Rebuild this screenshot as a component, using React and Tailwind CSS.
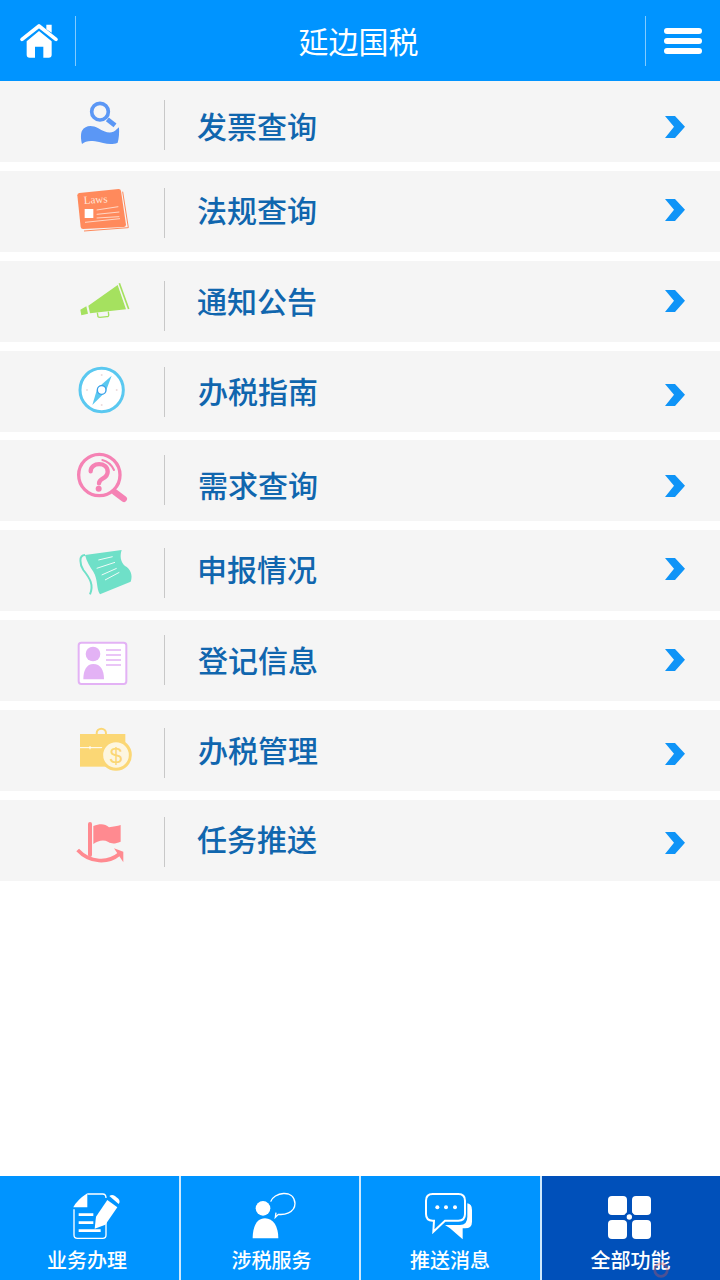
const FONT = "font-['Noto_Sans_CJK_SC','Noto_Sans',sans-serif]";

function Chevron() {
  return (
    <svg viewBox="135 348 60 66" className="w-[20px] h-[22px]">
      <path d="M135 348 L165 348 L195 380 L165 414 L135 414 L162 380Z" fill="#0f94f7" />
    </svg>
  );
}

const ic1 = (
  <g>
    <circle cx="300" cy="335" r="25" fill="none" stroke="#5b97f5" strokeWidth="11" />
    <path d="M322 358 L345 376" stroke="#5b97f5" strokeWidth="14" />
    <path d="M246 432 C242 415 242 400 246 392 C256 376 275 374 295 385 C315 397 335 405 350 388 L357 382 C358 400 357 415 353 428 C330 438 310 428 285 424 C268 421 255 424 246 432Z" fill="#5b97f5" />
  </g>
);
const ic2 = (
  <g>
    <path d="M368 575 L385 683 L252 693" fill="none" stroke="#ff8a5c" strokeWidth="3" />
    <path d="M238 579 L356 567 Q362 567 363 573 L378 674 Q378 680 372 681 L249 687 Q243 687 242 681 L232 586 Q232 580 238 579Z" fill="#ff8a5c" />
    <text x="252" y="612" fontSize="33" fill="#ffe6da" transform="rotate(-4 252 612)" fontFamily="Liberation Serif, serif">Laws</text>
    <rect x="254" y="627" width="26" height="27" fill="#fff" />
    <path d="M290 630 L355 620 M290 643 L358 636 M290 654 L358 650 M255 667 L360 656" stroke="#ffe6da" strokeWidth="2.5" />
  </g>
);
const ic3 = (
  <g>
    <path d="M121 149 L139 139 L144 161 L124 166Z M145 137 L233 75 L258 148 L150 160Z" fill="#a5e15f" />
    <path d="M238 70 L266 147" stroke="#a5e15f" strokeWidth="5" />
    <path d="M172 158 L174 170 Q175 172 180 172 L200 170 Q207 170 206 165 L205 155" fill="none" stroke="#a5e15f" strokeWidth="4" />
  </g>
);
const ic4 = (
  <g>
    <circle cx="185" cy="390" r="65" fill="#fff" stroke="#5ac8f0" strokeWidth="9" />
    <path d="M215 347 L197 395 L172 385Z" fill="#5ac8f0" />
    <path d="M157 435 L172 385 L197 395Z" fill="#5ac8f0" />
    <circle cx="185" cy="390" r="13" fill="#fff" stroke="#3aa0e8" strokeWidth="4" />
    <g fill="#ecdcdc">
      <circle cx="185" cy="345" r="3" /><circle cx="185" cy="435" r="3" /><circle cx="141" cy="390" r="3" /><circle cx="230" cy="390" r="3" />
    </g>
  </g>
);
const ic5 = (
  <g fill="none" stroke="#f582b4" strokeLinecap="round">
    <circle cx="178" cy="645" r="62" strokeWidth="10" />
    <path d="M224 696 L252 717" strokeWidth="18" />
    <path d="M152 634 C152 605 203 605 203 635 C203 658 178 652 177 670" strokeWidth="13" />
    <circle cx="176" cy="686" r="9" fill="#f582b4" stroke="none" />
    <path d="M187 600 C203 604 215 615 222 630" strokeWidth="6" />
  </g>
);
const ic6 = (
  <g>
    <path d="M135 885 L245 870 C240 885 240 905 255 918 C270 925 280 945 272 965 L180 1003 C168 985 175 960 160 935 C150 920 140 905 135 885Z" fill="#6fe0c8" />
    <path d="M135 885 C115 885 120 915 130 930 C150 955 162 975 150 1003" fill="none" stroke="#6fe0c8" strokeWidth="6" />
    <path d="M175 900 L218 890 M170 925 L225 907 M185 945 L230 925 M195 960 L238 937" stroke="#f0fbf8" strokeWidth="3" />
  </g>
);
const ic7 = (
  <g>
    <rect x="116" y="98" width="143" height="124" rx="8" fill="#fff" stroke="#e3b2f5" strokeWidth="6" />
    <circle cx="159" cy="132" r="22" fill="#e3b2f5" />
    <path d="M130 208 C130 180 140 162 160 162 C182 162 192 180 192 208Z" fill="#e3b2f5" />
    <path d="M198 120 L243 120 M198 135 L243 135 M198 150 L243 150 M198 165 L243 165" stroke="#e3b2f5" strokeWidth="5" />
  </g>
);
const ic8 = (
  <g>
    <circle cx="184" cy="370" r="14" fill="none" stroke="#fbd775" strokeWidth="6" />
    <rect x="120" y="372" width="136" height="98" fill="#fbd775" />
    <path d="M120 413 L190 413 M150 408 L150 418" stroke="#fff" strokeWidth="3" />
    <circle cx="228" cy="435" r="43" fill="#fdf6e0" stroke="#fbd775" strokeWidth="9" />
    <text x="228" y="459" textAnchor="middle" fontSize="68" fill="#fbd775" fontFamily="Liberation Sans, sans-serif">$</text>
  </g>
);
const ic9 = (
  <g>
    <path d="M150 642 L150 735" stroke="#ff8a90" strokeWidth="12" strokeLinecap="round" />
    <path d="M160 648 C180 640 195 640 207 652 C220 650 232 648 242 645 L242 695 C225 702 215 702 205 696 C190 688 175 692 160 702Z" fill="#ff8a90" />
    <path d="M113 720 C150 760 205 760 238 732" fill="none" stroke="#ff8a90" strokeWidth="11" />
    <path d="M222 715 L250 725 L250 757Z" fill="#ff8a90" />
  </g>
);

const rows = [
  { t: "发票查询", icon: ic1, vb: "210 243 210 243", div: "mt-[19px]", text: "mt-[19px] ml-[32px]", arrow: "mt-[35px]" },
  { t: "法规查询", icon: ic2, vb: "210 513 210 243", div: "mt-[17px]", text: "mt-[13px] ml-[32px]", arrow: "mt-[28px]" },
  { t: "通知公告", icon: ic3, vb: "90 3 210 243", div: "mt-[20px]", text: "mt-[14px] ml-[32px]", arrow: "mt-[29px]" },
  { t: "办税指南", icon: ic4, vb: "90 273 210 243", div: "mt-[16px]", text: "mt-[14px] ml-[33px]", arrow: "mt-[33px]" },
  { t: "需求查询", icon: ic5, vb: "90 540 210 243", div: "mt-[15px]", text: "mt-[19px] ml-[33px]", arrow: "mt-[35px]", box: "-mt-px" },
  { t: "申报情况", icon: ic6, vb: "90 810 210 243", div: "mt-[18px]", text: "mt-[13px] ml-[32px]", arrow: "mt-[28px]" },
  { t: "登记信息", icon: ic7, vb: "90 30 210 243", div: "mt-[15px]", text: "mt-[14px] ml-[33px]", arrow: "mt-[29px]" },
  { t: "办税管理", icon: ic8, vb: "90 300 210 243", div: "mt-[18px]", text: "mt-[14px] ml-[33px]", arrow: "mt-[33px]" },
  { t: "任务推送", icon: ic9, vb: "90 570 210 243", div: "mt-[17px]", text: "mt-[13px] ml-[32px]", arrow: "mt-[32px]" },
];

const tabs = [
  {
    t: "业务办理", bg: "bg-[#0094ff]", vb: "198 60 180 162", svg: "ml-[66px]", text: "ml-[47px]",
    icon: (
      <g>
        <path d="M262 72 L308 72 Q318 72 318 84 M318 150 L318 195 Q318 205 308 205 L232 205 Q222 205 222 195 L222 118" fill="none" stroke="#fff" strokeWidth="4" />
        <path d="M220 112 C225 100 245 80 262 70 L262 112Z" fill="#fff" />
        <path d="M236 134 L280 134 M236 158 L280 158 M236 182 L302 182" stroke="#fff" strokeWidth="8" />
        <path d="M322 90 L352 112 L316 164 L284 176 L288 140Z" fill="#fff" />
        <path d="M328 78 Q336 72 345 78 L355 86 Q362 94 356 102Z" fill="#fff" />
      </g>
    ),
  },
  {
    t: "涉税服务", bg: "bg-[#0094ff]", vb: "732 60 180 162", svg: "ml-[63px]", text: "ml-[51px]",
    icon: (
      <g>
        <circle cx="789" cy="115" r="22" fill="#fff" />
        <path d="M758 205 C758 170 770 145 795 145 C820 145 835 170 835 205Z" fill="#fff" />
        <path d="M812 95 C820 68 882 55 885 100 C885 130 850 135 835 133 L826 142 L828 128" fill="none" stroke="#fff" strokeWidth="4" />
      </g>
    ),
  },
  {
    t: "推送消息", bg: "bg-[#0094ff]", vb: "174 60 180 162", svg: "ml-[57px]", text: "ml-[49px]",
    icon: (
      <g>
        <path d="M218 72 L295 72 Q315 72 315 92 L315 132 Q315 152 295 152 L255 152 L220 185 L222 152 L218 152 Q198 152 198 132 L198 92 Q198 72 218 72Z" fill="none" stroke="#fff" strokeWidth="6" />
        <circle cx="232" cy="112" r="6" fill="#fff" /><circle cx="258" cy="112" r="6" fill="#fff" /><circle cx="285" cy="112" r="6" fill="#fff" />
        <path d="M322 100 Q336 102 336 120 L336 155 Q336 175 315 175 L308 175 L308 208 L270 175 L255 165 L300 165 Q322 165 322 140Z" fill="#fff" />
      </g>
    ),
  },
  {
    t: "全部功能", bg: "bg-[#0050ba]", vb: "714 60 180 162", svg: "ml-[57px]", text: "ml-[49px]",
    icon: (
      <g>
        <rect x="741" y="78" width="57" height="57" rx="12" fill="#fff" />
        <rect x="813" y="78" width="57" height="57" rx="12" fill="#fff" />
        <rect x="741" y="150" width="57" height="57" rx="12" fill="#fff" />
        <rect x="813" y="150" width="57" height="57" rx="12" fill="#fff" />
        <circle cx="805" cy="141" r="15" fill="#0050ba" />
        <circle cx="805" cy="141" r="8" fill="#fff" />
      </g>
    ),
  },
];

export default function App() {
  return (
    <div className={`${FONT} relative w-[720px] h-[1280px] bg-white flex flex-col overflow-hidden`}>
      <header className="h-[81px] bg-[#0094ff] flex items-center shrink-0">
        <svg viewBox="48 60 144 126" className="w-[48px] h-[42px] ml-[16px]">
          <path d="M66 118 L117 78 L168 118" fill="none" stroke="#fff" strokeWidth="11" strokeLinecap="round" strokeLinejoin="round" />
          <path d="M139 74 L155 74 L155 98 L139 88Z" fill="#fff" />
          <path d="M117 93 L155 124 L155 164 Q155 173 146 173 L130 173 L130 140 L105 140 L105 173 L89 173 Q80 173 80 164 L80 124Z" fill="#fff" />
        </svg>
        <div className="w-px h-[50px] bg-white/50 ml-[11px]" />
        <div className="flex-1 text-center text-white text-[30px] leading-[40px] pr-[4px] pb-[2px]">延边国税</div>
        <div className="w-px h-[50px] bg-white/50" />
        <div className="flex flex-col gap-[4px] ml-[18px] mr-[18px]">
          <div className="w-[38px] h-[6px] rounded-full bg-white" />
          <div className="w-[38px] h-[6px] rounded-full bg-white" />
          <div className="w-[38px] h-[6px] rounded-full bg-white" />
        </div>
      </header>

      <main className="flex-1 flex flex-col gap-[9px]">
        {rows.map((r) => (
          <div key={r.t} className={`h-[81px] bg-[#f5f5f5] flex items-start ${r.box || ""}`}>
            <svg viewBox={r.vb} className="w-[70px] h-[81px] ml-[70px] shrink-0">{r.icon}</svg>
            <div className={`w-px h-[50px] bg-[#c8c8c8] ml-[24px] ${r.div}`} />
            <div className={`h-[50px] leading-[50px] text-[30px] font-medium text-[#1066ae] ${r.text}`}>{r.t}</div>
            <div className={`ml-auto mr-[35px] ${r.arrow}`}><Chevron /></div>
          </div>
        ))}
      </main>

      <footer className="h-[104px] flex shrink-0 bg-[#cfe9fd] gap-[2px]">
        {tabs.map((t) => (
          <div key={t.t} className={`${t.bg} flex-1 flex flex-col items-start`}>
            <svg viewBox={t.vb} className={`w-[60px] h-[54px] mt-[14px] ${t.svg}`}>{t.icon}</svg>
            <div className={`text-[20px] leading-[28px] font-medium text-white whitespace-nowrap mt-[2px] ${t.text}`}>{t.t}</div>
          </div>
        ))}
      </footer>

      <svg viewBox="0 0 20 20" className="absolute left-[652px] top-[1261px] w-[18px] h-[18px] opacity-35">
        <circle cx="10" cy="10" r="7" fill="none" stroke="#d9534f" strokeWidth="3" />
      </svg>
    </div>
  );
}
